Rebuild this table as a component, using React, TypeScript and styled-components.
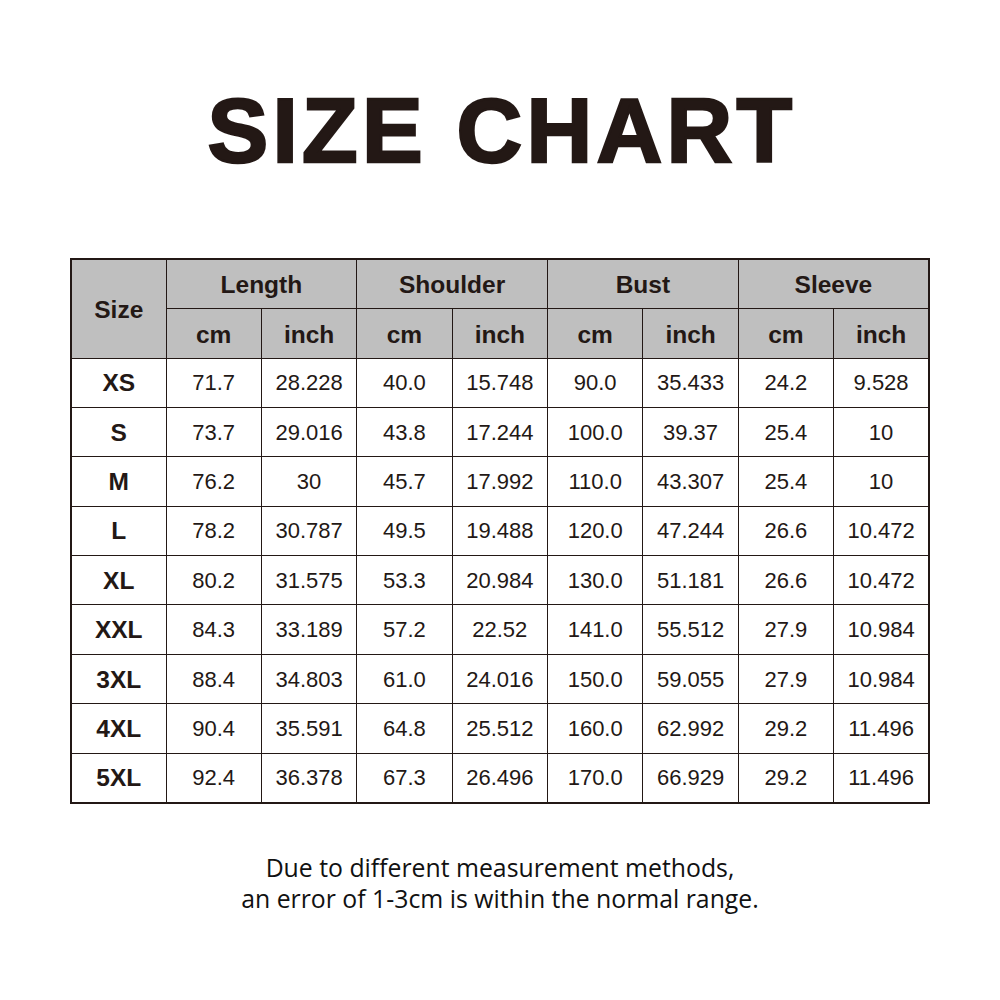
import React from "react";
import styled, { createGlobalStyle } from "styled-components";

const Global = createGlobalStyle`
  html, body { margin: 0; padding: 0; background: #ffffff; }
  body { width: 1000px; height: 1000px; overflow: hidden; }
`;

const Page = styled.div`
  width: 1000px;
  height: 1000px;
  display: flex;
  flex-direction: column;
  align-items: center;
  color: #231815;
`;

const Title = styled.h1`
  margin: 85px 0 0 0;
  padding-left: 4px;
  font-family: "Liberation Sans", Arial, sans-serif;
  font-weight: 700;
  font-size: 91px;
  line-height: 91px;
  letter-spacing: 4.3px;
  -webkit-text-stroke: 2.5px #231815;
  color: #231815;
`;

const Table = styled.table`
  margin-top: 82px;
  width: 860px;
  table-layout: fixed;
  border-collapse: collapse;
  border: 2px solid #231815;
  font-family: "Liberation Sans", Arial, sans-serif;
`;

const Cell = styled.td<{ $head?: boolean; $bold?: boolean }>`
  border: 1px solid #231815;
  background: ${(p) => (p.$head ? "#bfbfbf" : "#ffffff")};
  text-align: center;
  vertical-align: middle;
  padding: ${(p) => (p.$head ? "3px 0 0 0" : "1px 0 0 0")};
  font-size: ${(p) => (p.$head || p.$bold ? "24.5px" : "22px")};
  font-weight: ${(p) => (p.$bold ? 700 : 400)};
  color: #231815;
`;

const Row = styled.tr<{ $h: number }>`
  height: ${(p) => p.$h}px;
`;

const Note = styled.div`
  margin-top: 48px;
  font-family: "Open Sans", "Noto Sans", sans-serif;
  font-size: 24.8px;
  line-height: 31px;
  text-align: center;
  color: #111111;
`;

const groups = ["Length", "Shoulder", "Bust", "Sleeve"];

const data: string[][] = [
  ["XS", "71.7", "28.228", "40.0", "15.748", "90.0", "35.433", "24.2", "9.528"],
  ["S", "73.7", "29.016", "43.8", "17.244", "100.0", "39.37", "25.4", "10"],
  ["M", "76.2", "30", "45.7", "17.992", "110.0", "43.307", "25.4", "10"],
  ["L", "78.2", "30.787", "49.5", "19.488", "120.0", "47.244", "26.6", "10.472"],
  ["XL", "80.2", "31.575", "53.3", "20.984", "130.0", "51.181", "26.6", "10.472"],
  ["XXL", "84.3", "33.189", "57.2", "22.52", "141.0", "55.512", "27.9", "10.984"],
  ["3XL", "88.4", "34.803", "61.0", "24.016", "150.0", "59.055", "27.9", "10.984"],
  ["4XL", "90.4", "35.591", "64.8", "25.512", "160.0", "62.992", "29.2", "11.496"],
  ["5XL", "92.4", "36.378", "67.3", "26.496", "170.0", "66.929", "29.2", "11.496"],
];

export default function App() {
  return (
    <Page>
      <Global />
      <Title>SIZE CHART</Title>
      <Table>
        <colgroup>
          <col style={{ width: 95 }} />
          {Array.from({ length: 8 }).map((_, i) => (
            <col key={i} />
          ))}
        </colgroup>
        <thead>
          <Row $h={49}>
            <Cell as="th" $head $bold rowSpan={2}>
              Size
            </Cell>
            {groups.map((g) => (
              <Cell as="th" $head $bold colSpan={2} key={g}>
                {g}
              </Cell>
            ))}
          </Row>
          <Row $h={50}>
            {groups.map((g) => (
              <React.Fragment key={g}>
                <Cell as="th" $head $bold>
                  cm
                </Cell>
                <Cell as="th" $head $bold>
                  inch
                </Cell>
              </React.Fragment>
            ))}
          </Row>
        </thead>
        <tbody>
          {data.map((r) => (
            <Row $h={49.4} key={r[0]}>
              {r.map((v, i) => (
                <Cell key={i} $bold={i === 0}>
                  {v}
                </Cell>
              ))}
            </Row>
          ))}
        </tbody>
      </Table>
      <Note>
        Due to different measurement methods,
        <br />
        an error of 1-3cm is within the normal range.
      </Note>
    </Page>
  );
}
